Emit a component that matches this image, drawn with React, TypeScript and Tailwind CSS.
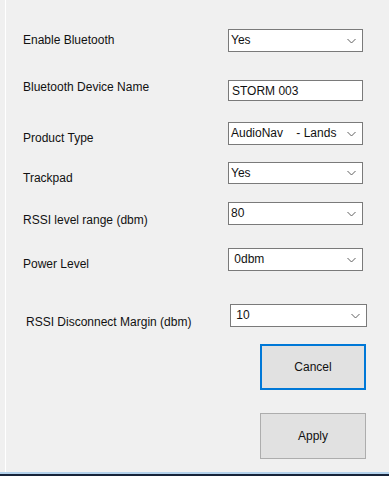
const font = { fontFamily: '"Liberation Sans", Arial, sans-serif' }

function Chevron() {
  return (
    <svg width="9" height="5" viewBox="0 0 9 5" className="absolute right-[6px] top-1/2 -translate-y-1/2">
      <path d="M0.5 0.5 L4.5 4.5 L8.5 0.5" fill="none" stroke="#606060" strokeWidth="1" />
    </svg>
  )
}

function Combo({ value, w = "w-[135px]", h = "h-[23px]" }: { value: string; w?: string; h?: string }) {
  return (
    <div className={`relative ${w} ${h} shrink-0 border border-[#7a7a7a] bg-white`}>
      <span className="absolute left-[2px] top-[3px] whitespace-pre text-[12px] leading-[14px] text-[#111]">{value}</span>
      <Chevron />
    </div>
  )
}

function Row({
  label,
  top,
  labelTop,
  children,
  labelLeft = "pl-[23px]",
  controlLeft = "left-[228px]",
}: {
  label: string
  top: string
  labelTop: string
  children: React.ReactNode
  labelLeft?: string
  controlLeft?: string
}) {
  return (
    <div className={`relative h-[23px] ${top}`}>
      <div className={`${labelLeft} ${labelTop} text-[12px] leading-[14px] text-[#111]`}>{label}</div>
      <div className={`absolute top-0 ${controlLeft}`}>{children}</div>
    </div>
  )
}

export default function App() {
  return (
    <div className="h-[488px] w-[389px] bg-white" style={font}>
      <div className="h-[472px] bg-[#f0f0f0] pl-[5px]">
        <div className="h-full border-l border-white pt-[29px]">
          <div className="-ml-[6px]">
            <Row label="Enable Bluetooth" top="mt-0" labelTop="pt-[4px]">
              <Combo value="Yes" />
            </Row>
            <Row label="Bluetooth Device Name" top="mt-[28px]" labelTop="pt-0">
              <div className="h-[21px] w-[135px] border border-[#7a7a7a] bg-white pl-[3px] pt-[3px] text-[12px] leading-[14px] text-[#111]">
                STORM 003
              </div>
            </Row>
            <Row label="Product Type" top="mt-[19px]" labelTop="pt-[9px]">
              <Combo value={"AudioNav    - Lands"} />
            </Row>
            <Row label="Trackpad" top="mt-[17px]" labelTop="pt-[9px]">
              <Combo value="Yes" h="h-[22px]" />
            </Row>
            <Row label="RSSI level range (dbm)" top="mt-[17px]" labelTop="pt-[11px]">
              <Combo value="80" />
            </Row>
            <Row label="Power Level" top="mt-[23px]" labelTop="pt-[9px]">
              <Combo value=" 0dbm" />
            </Row>
            <Row
              label="RSSI Disconnect Margin (dbm)"
              top="mt-[33px]"
              labelTop="pt-[11px]"
              labelLeft="pl-[26px]"
              controlLeft="left-[230px]"
            >
              <Combo value=" 10" w="w-[137px]" />
            </Row>
            <div className="mt-[17px] flex flex-col items-start pl-[260px]">
              <button className="h-[46px] w-[106px] border-2 border-[#0078d7] bg-[#e1e1e1] text-[12px] text-[#111]">
                Cancel
              </button>
              <button className="mt-[23px] h-[46px] w-[106px] border border-[#adadad] bg-[#e1e1e1] text-[12px] text-[#111]">
                Apply
              </button>
            </div>
          </div>
        </div>
      </div>
      <div className="h-[2px] bg-[#b4d2ec]" />
      <div className="h-[2px] bg-[#17243a]" />
    </div>
  )
}
